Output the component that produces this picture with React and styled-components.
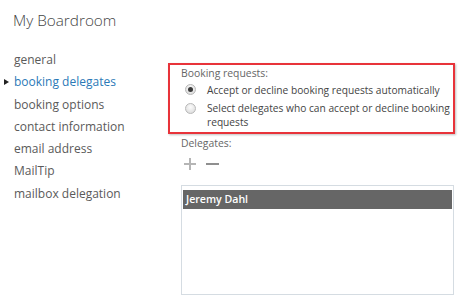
import React from 'react';
import styled, { createGlobalStyle } from 'styled-components';

const GlobalStyle = createGlobalStyle`
    html, body {
        margin: 0;
        padding: 0;
        background: #fff;
        font-family: "Open Sans", "Noto Sans", sans-serif;
    }
`;

const Page = styled.div`
    width: 460px;
    height: 300px;
    overflow: hidden;
`;

const Title = styled.h1`
    margin: 0;
    padding: 9px 0 0 13px;
    font-size: 15.3px;
    font-weight: 300;
    color: #444;
    line-height: 22px;
`;

const Body = styled.div`
    display: flex;
    padding-top: 18px;
`;

const Nav = styled.ul`
    list-style: none;
    margin: 0;
    padding: 0 0 0 14px;
    width: 168px;
    box-sizing: border-box;
    flex: none;
`;

const NavItem = styled.li`
    position: relative;
    font-size: 12px;
    line-height: 22.3px;
    color: ${({ $active }) => ($active ? '#2b79b7' : '#5a5a5a')};

    &::before {
        content: '';
        display: ${({ $active }) => ($active ? 'block' : 'none')};
        position: absolute;
        left: -10px;
        top: 8px;
        border-left: 5px solid #222;
        border-top: 3.5px solid transparent;
        border-bottom: 3.5px solid transparent;
    }
`;

const Main = styled.div`
    flex: 1;
    padding-top: 14px;
    padding-right: 5px;
`;

const Highlight = styled.div`
    border: 2px solid #e8333a;
    box-shadow: 1px 1px 2px rgba(0, 0, 0, 0.25);
    padding: 1px 0 3px 11px;
`;

const Label = styled.div`
    font-size: 10.4px;
    color: #666;
    line-height: 14px;
`;

const Options = styled.div`
    display: flex;
    flex-direction: column;
    gap: 4px;
    margin-top: 3px;
`;

const Option = styled.label`
    display: flex;
    align-items: flex-start;
    gap: 11px;
    font-size: 10.2px;
    line-height: 14px;
    color: #444;
    padding-left: 4px;
`;

const Radio = styled.span`
    flex: none;
    width: 11px;
    height: 11px;
    margin-top: ${({ $checked }) => ($checked ? '1px' : '2px')};
    border-radius: 50%;
    border: 1px solid #b8b8b8;
    box-sizing: border-box;
    background: radial-gradient(circle at 50% 35%, #fcfcfc, #d6d6d6);
    display: flex;
    align-items: center;
    justify-content: center;

    &::after {
        content: '';
        display: ${({ $checked }) => ($checked ? 'block' : 'none')};
        width: 5px;
        height: 5px;
        border-radius: 50%;
        background: #3a3a3a;
    }
`;

const Delegates = styled.div`
    padding: 2px 0 0 13px;
`;

const Tools = styled.div`
    display: flex;
    gap: 9px;
    margin-top: 8px;
    padding-left: 2px;
    height: 12px;
    align-items: center;
`;

const ToolIcon = styled.svg`
    display: block;
`;

const ListBox = styled.div`
    margin-top: 15px;
    width: 273px;
    height: 110px;
    box-sizing: border-box;
    border: 1px solid #d5dce2;
    padding: 4px 1px 0 1px;
`;

const ListRow = styled.div`
    background: ${({ $selected }) => ($selected ? '#666' : 'transparent')};
    color: ${({ $selected }) => ($selected ? '#fff' : '#444')};
    font-size: 10.6px;
    font-weight: 600;
    line-height: 19px;
    padding-left: 3px;
`;

const navItems = [
    'general',
    'booking delegates',
    'booking options',
    'contact information',
    'email address',
    'MailTip',
    'mailbox delegation',
];

const App = () => {
    return (
        <Page>
            <GlobalStyle />
            <Title>My Boardroom</Title>
            <Body>
                <Nav>
                    {navItems.map((item) => (
                        <NavItem key={item} $active={item === 'booking delegates'}>
                            {item}
                        </NavItem>
                    ))}
                </Nav>
                <Main>
                    <Highlight>
                        <Label>Booking requests:</Label>
                        <Options>
                            <Option>
                                <Radio $checked />
                                <span>Accept or decline booking requests automatically</span>
                            </Option>
                            <Option>
                                <Radio />
                                <span>Select delegates who can accept or decline booking requests</span>
                            </Option>
                        </Options>
                    </Highlight>
                    <Delegates>
                        <Label>Delegates:</Label>
                        <Tools>
                            <ToolIcon width="14" height="12" viewBox="0 0 14 12">
                                <path d="M7 0v12M1 6h12" stroke="#b5b5b5" strokeWidth="2" />
                            </ToolIcon>
                            <ToolIcon width="13" height="12" viewBox="0 0 13 12">
                                <path d="M0 6h13" stroke="#8f8f8f" strokeWidth="2" />
                            </ToolIcon>
                        </Tools>
                        <ListBox>
                            <ListRow $selected>Jeremy Dahl</ListRow>
                        </ListBox>
                    </Delegates>
                </Main>
            </Body>
        </Page>
    );
};

export default App;
